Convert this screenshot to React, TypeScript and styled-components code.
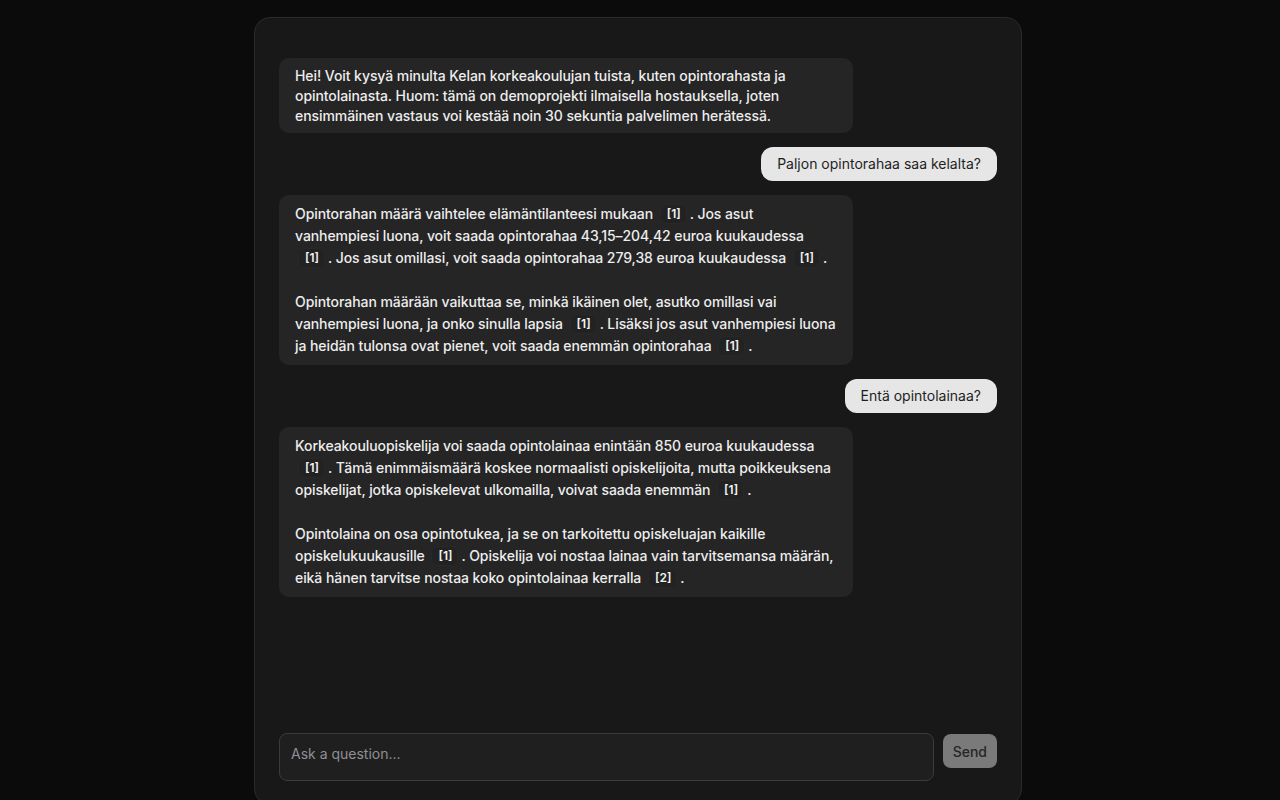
import React, { useState } from 'react';
import styled, { createGlobalStyle } from 'styled-components';

const GlobalStyle = createGlobalStyle`
  html, body {
    margin: 0;
    padding: 0;
    background: #0b0b0b;
    font-family: Inter, "Noto Sans", "Liberation Sans", sans-serif;
    overflow: hidden;
  }
  * { box-sizing: border-box; }
`;

// ----------------------------------------------------------------------
// Layout
const Page = styled.div`
  height: 100vh;
  display: flex;
  justify-content: center;
  padding: 17px 4px 0 0;
`;

const ChatCard = styled.div`
  width: 768px;
  height: 788px;
  flex-shrink: 0;
  display: flex;
  flex-direction: column;
  background: #181818;
  border: 1px solid #2a2a2a;
  border-radius: 16px;
  padding: 40px 24px 23px;
`;

const MessageList = styled.div`
  flex: 1;
  display: flex;
  flex-direction: column;
  gap: 14px;
  overflow: hidden;
`;

const Bubble = styled.div<{ $from: 'bot' | 'user'; $cited?: boolean }>`
  max-width: 80%;
  align-self: ${(p) => (p.$from === 'user' ? 'flex-end' : 'flex-start')};
  background: ${(p) => (p.$from === 'user' ? '#e6e6e6' : '#252525')};
  color: ${(p) => (p.$from === 'user' ? '#1f1f1f' : '#ededed')};
  border-radius: ${(p) => (p.$from === 'user' ? '12px' : '10px')};
  padding: ${(p) =>
    p.$from === 'user' ? '7px 16px' : p.$cited ? '8px 16px 8px' : '8px 16px 7px'};
  font-size: 14px;
  font-weight: ${(p) => (p.$from === 'user' ? 400 : 500)};
  letter-spacing: ${(p) => (p.$from === 'user' ? '0' : '-0.07px')};
  line-height: ${(p) => (p.$cited ? '22px' : '20px')};
  white-space: pre-wrap;
`;

const Citation = styled.button`
  display: inline-block;
  margin: 0 3px;
  padding: 0 5px 0 6px;
  height: 20px;
  line-height: 18px;
  vertical-align: 1px;
  font-family: inherit;
  font-size: 12px;
  font-weight: 600;
  letter-spacing: 0;
  color: #f2f2f2;
  background: #222222;
  border: 1px solid #282828;
  border-radius: 6px;
  cursor: pointer;
`;

const Composer = styled.form`
  display: flex;
  align-items: flex-start;
  gap: 9px;
`;

const Input = styled.textarea`
  flex: 1;
  height: 48px;
  resize: none;
  background: #1f1f1f;
  border: 1px solid #3b3b3b;
  border-radius: 8px;
  padding: 10px 11px;
  font-family: inherit;
  font-size: 14px;
  line-height: 20px;
  color: #e8e8e8;
  outline: none;
  &::placeholder { color: #8f8f94; }
`;

const SendButton = styled.button`
  margin-top: 1px;
  height: 34px;
  padding: 0 10px;
  background: #7a7a7a;
  color: #262626;
  border: none;
  border-radius: 8px;
  font-family: inherit;
  font-size: 14px;
  font-weight: 500;
  cursor: pointer;
`;
// ----------------------------------------------------------------------

type Part = string | number;
type Message = { from: 'bot' | 'user'; parts: Part[] };

// numbers in parts are citation chips
const messages: Message[] = [
  {
    from: 'bot',
    parts: [
      'Hei! Voit kysyä minulta Kelan korkeakoulujan tuista, kuten opintorahasta ja opintolainasta. Huom: tämä on demoprojekti ilmaisella hostauksella, joten ensimmäinen vastaus voi kestää noin 30 sekuntia palvelimen herätessä.',
    ],
  },
  { from: 'user', parts: ['Paljon opintorahaa saa kelalta?'] },
  {
    from: 'bot',
    parts: [
      'Opintorahan määrä vaihtelee elämäntilanteesi mukaan ',
      1,
      '. Jos asut vanhempiesi luona, voit saada opintorahaa 43,15–204,42 euroa kuukaudessa ',
      1,
      '. Jos asut omillasi, voit saada opintorahaa 279,38 euroa kuukaudessa ',
      1,
      '.\n\nOpintorahan määrään vaikuttaa se, minkä ikäinen olet, asutko omillasi vai vanhempiesi luona, ja onko sinulla lapsia ',
      1,
      '. Lisäksi jos asut vanhempiesi luona ja heidän tulonsa ovat pienet, voit saada enemmän opintorahaa ',
      1,
      '.',
    ],
  },
  { from: 'user', parts: ['Entä opintolainaa?'] },
  {
    from: 'bot',
    parts: [
      'Korkeakouluopiskelija voi saada opintolainaa enintään 850 euroa kuukaudessa ',
      1,
      '. Tämä enimmäismäärä koskee normaalisti opiskelijoita, mutta poikkeuksena opiskelijat, jotka opiskelevat ulkomailla, voivat saada enemmän ',
      1,
      '.\n\nOpintolaina on osa opintotukea, ja se on tarkoitettu opiskeluajan kaikille opiskelukuukausille ',
      1,
      '. Opiskelija voi nostaa lainaa vain tarvitsemansa määrän, eikä hänen tarvitse nostaa koko opintolainaa kerralla ',
      2,
      '.',
    ],
  },
];

export default function App() {
  const [question, setQuestion] = useState('');

  return (
    <>
      <GlobalStyle />
      <Page>
        <ChatCard>
          <MessageList>
            {messages.map((m, i) => (
              <Bubble
                key={i}
                $from={m.from}
                $cited={m.parts.some((p) => typeof p === 'number')}
              >
                {m.parts.map((p, j) =>
                  typeof p === 'number' ? (
                    <Citation key={j} type="button">[{p}]</Citation>
                  ) : (
                    <React.Fragment key={j}>{p}</React.Fragment>
                  )
                )}
              </Bubble>
            ))}
          </MessageList>
          <Composer onSubmit={(e) => e.preventDefault()}>
            <Input
              placeholder="Ask a question..."
              value={question}
              onChange={(e) => setQuestion(e.target.value)}
            />
            <SendButton type="submit">Send</SendButton>
          </Composer>
        </ChatCard>
      </Page>
    </>
  );
}
